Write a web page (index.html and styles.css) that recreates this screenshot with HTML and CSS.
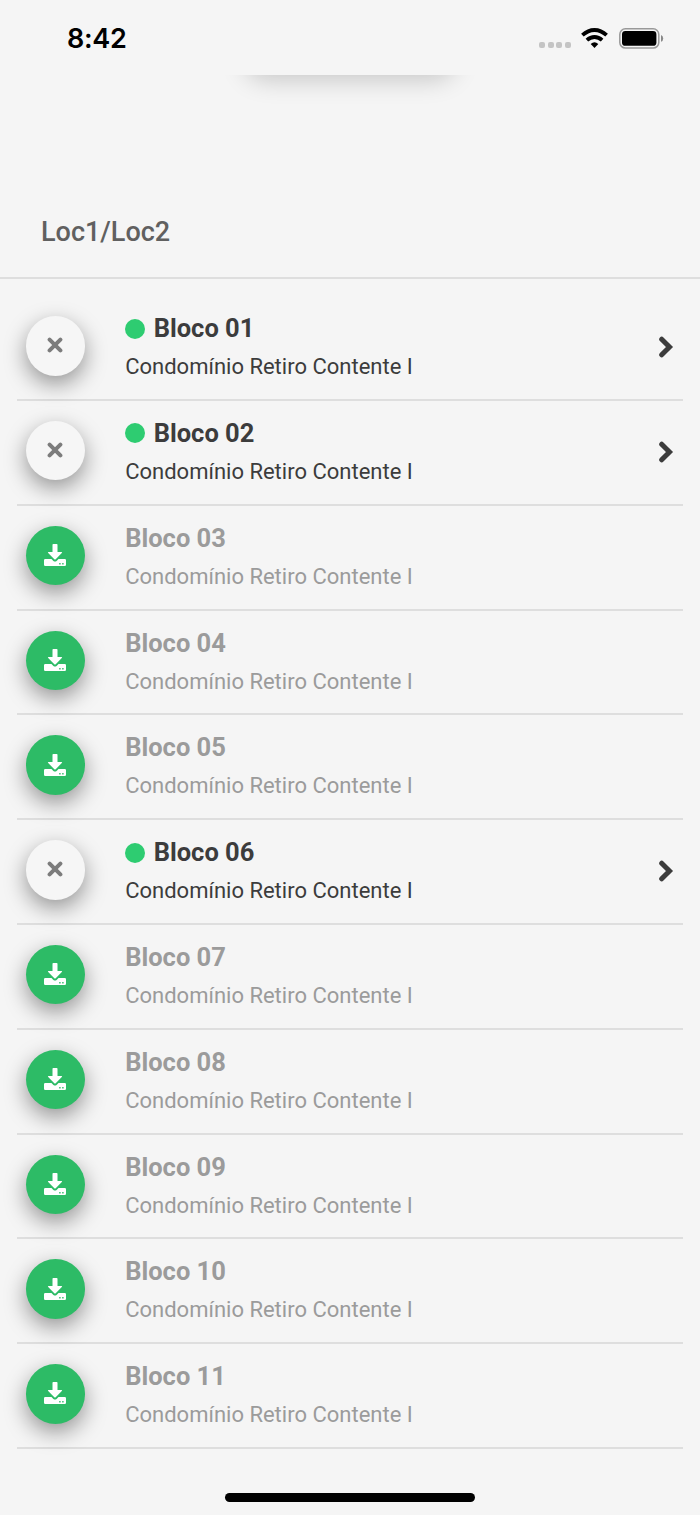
FILE: index.html
```html
<!DOCTYPE html>
<html lang="pt-BR">
<head>
  <meta charset="UTF-8">
  <title>Loc1/Loc2</title>
  <link rel="stylesheet" href="styles.css">
</head>
<body>

  <!-- Ícones -->
  <svg class="sprite" aria-hidden="true">
    <symbol id="icon-close" viewBox="0 0 16 16">
      <path d="M2.600 2.600L13.400 13.400M13.400 2.600L2.600 13.400" fill="none" stroke="currentColor" stroke-width="4" stroke-linecap="round"/>
    </symbol>
    <symbol id="icon-download" viewBox="0 0 22 22">
      <path fill="currentColor" d="M9.300 0h3.400q.8 0 .8.8V8h3.900q1.300 0 .4 1l-6.100 6.200q-.7.7-1.400 0L4.200 9q-.9-1 .4-1h3.900V.8q0-.8.8-.8z"/>
      <path fill="currentColor" fill-rule="evenodd" d="M1.200 15.100h6.300l1.900 1.800q1.600 1.400 3.200 0l1.900-1.800h6.300q1.200 0 1.200 1.200v4.500q0 1.200-1.200 1.200H1.200Q0 22 0 20.800v-4.500q0-1.200 1.200-1.200zM15.200 19v1.400h1.400V19zM18.200 19v1.400h1.400V19z"/>
    </symbol>
    <symbol id="icon-next" viewBox="0 0 16 22">
      <path d="M3.700 3.200L11.500 11L3.700 18.800" fill="none" stroke="currentColor" stroke-width="5" stroke-linecap="round" stroke-linejoin="miter"/>
    </symbol>
  </svg>

  <div class="status-bar">
    <span class="time">8:42</span>
    <div class="status-icons">
      <div class="signal"><i></i><i></i><i></i><i></i></div>
      <svg class="wifi" viewBox="0 0 27 20">
        <g fill="none" stroke="#000" stroke-width="3.800">
          <path d="M1.400 7.200Q7 2 13.500 2T25.600 7.200"/>
          <path d="M5.900 12.100Q9.300 9 13.500 9T21.100 12.100"/>
        </g>
        <path d="M9.700 16Q13.500 12.600 17.300 16L13.500 20z"/>
      </svg>
      <svg class="battery" viewBox="0 0 45 21">
        <rect x=".8" y=".8" width="39" height="19.200" rx="5.600" fill="none" stroke="#999" stroke-width="1.500"/>
        <rect x="3" y="3" width="34.400" height="14.800" rx="3.400"/>
        <path d="M42 7q2.200 1 2.200 3.400T42 13.800z" fill="#888"/>
      </svg>
    </div>
  </div>

  <div class="top-shadow"><div class="pill"></div></div>

  <header class="header">
    <h1>Loc1/Loc2</h1>
  </header>

  <ul class="list">
    <li class="row active">
      <button class="action close"><svg><use href="#icon-close"/></svg></button>
      <div class="info">
        <h2><span class="dot"></span>Bloco 01</h2>
        <p>Condomínio Retiro Contente I</p>
      </div>
      <svg class="next"><use href="#icon-next"/></svg>
    </li>
    <li class="row active">
      <button class="action close"><svg><use href="#icon-close"/></svg></button>
      <div class="info">
        <h2><span class="dot"></span>Bloco 02</h2>
        <p>Condomínio Retiro Contente I</p>
      </div>
      <svg class="next"><use href="#icon-next"/></svg>
    </li>
    <li class="row">
      <button class="action download"><svg><use href="#icon-download"/></svg></button>
      <div class="info">
        <h2>Bloco 03</h2>
        <p>Condomínio Retiro Contente I</p>
      </div>
    </li>
    <li class="row">
      <button class="action download"><svg><use href="#icon-download"/></svg></button>
      <div class="info">
        <h2>Bloco 04</h2>
        <p>Condomínio Retiro Contente I</p>
      </div>
    </li>
    <li class="row">
      <button class="action download"><svg><use href="#icon-download"/></svg></button>
      <div class="info">
        <h2>Bloco 05</h2>
        <p>Condomínio Retiro Contente I</p>
      </div>
    </li>
    <li class="row active">
      <button class="action close"><svg><use href="#icon-close"/></svg></button>
      <div class="info">
        <h2><span class="dot"></span>Bloco 06</h2>
        <p>Condomínio Retiro Contente I</p>
      </div>
      <svg class="next"><use href="#icon-next"/></svg>
    </li>
    <li class="row">
      <button class="action download"><svg><use href="#icon-download"/></svg></button>
      <div class="info">
        <h2>Bloco 07</h2>
        <p>Condomínio Retiro Contente I</p>
      </div>
    </li>
    <li class="row">
      <button class="action download"><svg><use href="#icon-download"/></svg></button>
      <div class="info">
        <h2>Bloco 08</h2>
        <p>Condomínio Retiro Contente I</p>
      </div>
    </li>
    <li class="row">
      <button class="action download"><svg><use href="#icon-download"/></svg></button>
      <div class="info">
        <h2>Bloco 09</h2>
        <p>Condomínio Retiro Contente I</p>
      </div>
    </li>
    <li class="row">
      <button class="action download"><svg><use href="#icon-download"/></svg></button>
      <div class="info">
        <h2>Bloco 10</h2>
        <p>Condomínio Retiro Contente I</p>
      </div>
    </li>
    <li class="row">
      <button class="action download"><svg><use href="#icon-download"/></svg></button>
      <div class="info">
        <h2>Bloco 11</h2>
        <p>Condomínio Retiro Contente I</p>
      </div>
    </li>
  </ul>

  <div class="home-indicator"></div>

</body>
</html>
```
FILE: styles.css
```css
* {
  box-sizing: border-box;
}

body {
  margin: 0;
  height: 1515px;
  background-color: #f5f5f5;
  font-family: Roboto, sans-serif;
  display: flex;
  flex-direction: column;
  overflow: hidden;
}

h1, h2, p, ul {
  margin: 0;
  padding: 0;
}

.sprite {
  display: none;
}

/* Barra de status */
.status-bar {
  height: 74px;
  padding: 0 36px 0 67px;
  display: flex;
  justify-content: space-between;
}

.time {
  margin-top: 22px;
  font-family: Inter, sans-serif;
  font-size: 27px;
  line-height: 33px;
  font-weight: 600;
  letter-spacing: -0.3px;
  color: #000;
}

.status-icons {
  display: flex;
  align-items: flex-start;
}

.signal {
  display: flex;
  gap: 2.600px;
  margin: 42px 10px 0 0;
}

.signal i {
  width: 6px;
  height: 6px;
  border-radius: 2px;
  background-color: #c4c4c4;
}

.wifi {
  width: 27px;
  height: 20px;
  margin: 28px 11px 0 0;
}

.battery {
  width: 45px;
  height: 21px;
  margin-top: 28px;
}

.top-shadow {
  height: 40px;
  padding: 1px 245px 0;
  overflow: hidden;
  clip-path: inset(1px 0 0 0);
}

.pill {
  height: 40px;
  margin-top: -41px;
  border-radius: 20px;
  box-shadow: 0 5px 26px rgba(0, 0, 0, 0.2);
}

/* Cabeçalho */
.header {
  height: 165px;
  padding: 100px 41px 0;
  border-bottom: 2px solid #dedede;
}

.header h1 {
  font-size: 27px;
  line-height: 36px;
  font-weight: 500;
  color: #606060;
}

/* Lista de blocos */
.list {
  list-style: none;
  padding: 17.200px 17px 0;
}

.row {
  height: 104.800px;
  padding: 20px 9px 0 8.500px;
  display: flex;
  align-items: flex-start;
  border-bottom: 2px solid #dedede;
}

.action {
  width: 59.400px;
  height: 59.400px;
  padding: 0;
  border: none;
  border-radius: 50%;
  display: flex;
  align-items: center;
  justify-content: center;
  box-shadow: 0 8px 22px rgba(0, 0, 0, 0.4);
}

.close {
  background-color: #f6f6f6;
  color: #7c7c7c;
}

.close svg {
  width: 16px;
  height: 16px;
  margin-bottom: 1px;
}

.download {
  background-color: #2dbb66;
  color: #fff;
}

.download svg {
  width: 22px;
  height: 22px;
  margin-bottom: 1px;
}

.info {
  flex: 1;
  margin-left: 40.300px;
  margin-top: -6px;
  color: #9b9b9b;
}

.info h2 {
  display: flex;
  align-items: center;
  font-size: 25.500px;
  line-height: 36px;
  font-weight: 700;
}

.info p {
  margin-top: 6px;
  font-size: 22px;
  line-height: 30px;
}

.active .info {
  color: #3c3c3c;
}

.dot {
  width: 20px;
  height: 20px;
  margin-top: 1px;
  margin-right: 8.500px;
  border-radius: 50%;
  background-color: #2ecc71;
}

.next {
  width: 16px;
  height: 22px;
  margin: 20px 0 0;
  color: #3c3c3c;
}

.home-indicator {
  width: 250px;
  height: 9px;
  margin: auto auto 13.500px;
  border-radius: 5px;
  background-color: #000;
}
```
